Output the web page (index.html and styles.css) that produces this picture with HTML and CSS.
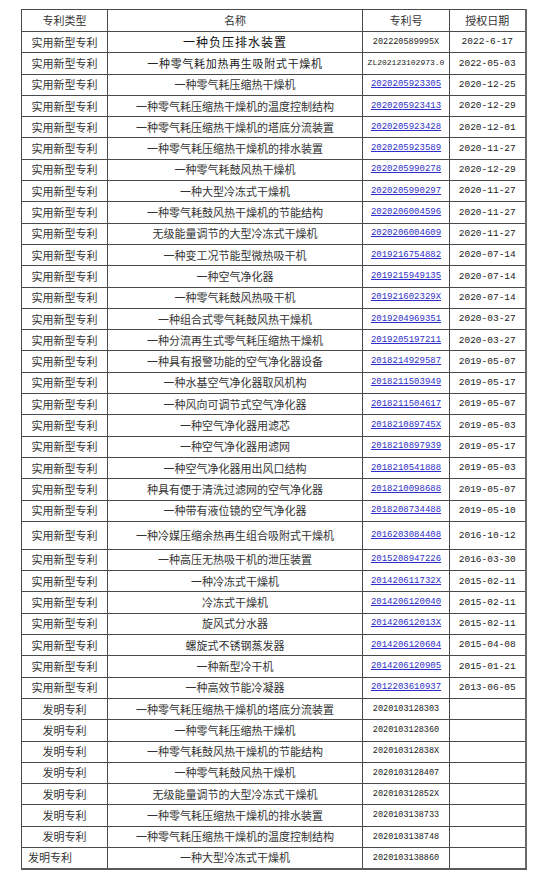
FILE: index.html
```html
<!DOCTYPE html>
<html lang="zh">
<head>
<meta charset="utf-8">
<title>专利列表</title>
<link rel="stylesheet" href="styles.css">
</head>
<body>
<table class="patents">
  <colgroup>
    <col class="c-type"><col class="c-name"><col class="c-no"><col class="c-date">
  </colgroup>
  <thead>
    <tr><th>专利类型</th><th>名称</th><th>专利号</th><th>授权日期</th></tr>
  </thead>
  <tbody>
    <tr><td>实用新型专利</td><td class="name big">一种负压排水装置</td><td class="no plain">202220589995X</td><td class="date">2022-6-17</td></tr>
    <tr><td>实用新型专利</td><td class="name wide">一种零气耗加热再生吸附式干燥机</td><td class="no plain small">ZL202123102973.0</td><td class="date">2022-05-03</td></tr>
    <tr><td>实用新型专利</td><td class="name">一种零气耗压缩热干燥机</td><td class="no"><a href="#">2020205923305</a></td><td class="date">2020-12-25</td></tr>
    <tr><td>实用新型专利</td><td class="name">一种零气耗压缩热干燥机的温度控制结构</td><td class="no"><a href="#">2020205923413</a></td><td class="date">2020-12-29</td></tr>
    <tr><td>实用新型专利</td><td class="name">一种零气耗压缩热干燥机的塔底分流装置</td><td class="no"><a href="#">2020205923428</a></td><td class="date">2020-12-01</td></tr>
    <tr><td>实用新型专利</td><td class="name">一种零气耗压缩热干燥机的排水装置</td><td class="no"><a href="#">2020205923589</a></td><td class="date">2020-11-27</td></tr>
    <tr><td>实用新型专利</td><td class="name">一种零气耗鼓风热干燥机</td><td class="no"><a href="#">2020205990278</a></td><td class="date">2020-12-29</td></tr>
    <tr><td>实用新型专利</td><td class="name">一种大型冷冻式干燥机</td><td class="no"><a href="#">2020205990297</a></td><td class="date">2020-11-27</td></tr>
    <tr><td>实用新型专利</td><td class="name">一种零气耗鼓风热干燥机的节能结构</td><td class="no"><a href="#">2020206004596</a></td><td class="date">2020-11-27</td></tr>
    <tr><td>实用新型专利</td><td class="name">无级能量调节的大型冷冻式干燥机</td><td class="no"><a href="#">2020206004609</a></td><td class="date">2020-11-27</td></tr>
    <tr><td>实用新型专利</td><td class="name">一种变工况节能型微热吸干机</td><td class="no"><a href="#">2019216754882</a></td><td class="date">2020-07-14</td></tr>
    <tr><td>实用新型专利</td><td class="name">一种空气净化器</td><td class="no"><a href="#">2019215949135</a></td><td class="date">2020-07-14</td></tr>
    <tr><td>实用新型专利</td><td class="name">一种零气耗鼓风热吸干机</td><td class="no"><a href="#">201921602329X</a></td><td class="date">2020-07-14</td></tr>
    <tr><td>实用新型专利</td><td class="name">一种组合式零气耗鼓风热干燥机</td><td class="no"><a href="#">2019204969351</a></td><td class="date">2020-03-27</td></tr>
    <tr><td>实用新型专利</td><td class="name">一种分流再生式零气耗压缩热干燥机</td><td class="no"><a href="#">2019205197211</a></td><td class="date">2020-03-27</td></tr>
    <tr><td>实用新型专利</td><td class="name">一种具有报警功能的空气净化器设备</td><td class="no"><a href="#">2018214929587</a></td><td class="date">2019-05-07</td></tr>
    <tr><td>实用新型专利</td><td class="name">一种水基空气净化器取风机构</td><td class="no"><a href="#">2018211503949</a></td><td class="date">2019-05-17</td></tr>
    <tr><td>实用新型专利</td><td class="name">一种风向可调节式空气净化器</td><td class="no"><a href="#">2018211504617</a></td><td class="date">2019-05-07</td></tr>
    <tr><td>实用新型专利</td><td class="name">一种空气净化器用滤芯</td><td class="no"><a href="#">201821089745X</a></td><td class="date">2019-05-03</td></tr>
    <tr><td>实用新型专利</td><td class="name">一种空气净化器用滤网</td><td class="no"><a href="#">2018210897939</a></td><td class="date">2019-05-17</td></tr>
    <tr><td>实用新型专利</td><td class="name">一种空气净化器用出风口结构</td><td class="no"><a href="#">2018210541888</a></td><td class="date">2019-05-03</td></tr>
    <tr><td>实用新型专利</td><td class="name">种具有便于清洗过滤网的空气净化器</td><td class="no"><a href="#">2018210098688</a></td><td class="date">2019-05-07</td></tr>
    <tr><td>实用新型专利</td><td class="name">一种带有液位镜的空气净化器</td><td class="no"><a href="#">2018208734488</a></td><td class="date">2019-05-10</td></tr>
    <tr class="tall"><td>实用新型专利</td><td class="name">一种冷媒压缩余热再生组合吸附式干燥机</td><td class="no"><a href="#">2016203084408</a></td><td class="date">2016-10-12</td></tr>
    <tr><td>实用新型专利</td><td class="name">一种高压无热吸干机的泄压装置</td><td class="no"><a href="#">2015208947226</a></td><td class="date">2016-03-30</td></tr>
    <tr><td>实用新型专利</td><td class="name">一种冷冻式干燥机</td><td class="no"><a href="#">201420611732X</a></td><td class="date">2015-02-11</td></tr>
    <tr><td>实用新型专利</td><td class="name">冷冻式干燥机</td><td class="no"><a href="#">2014206120040</a></td><td class="date">2015-02-11</td></tr>
    <tr><td>实用新型专利</td><td class="name">旋风式分水器</td><td class="no"><a href="#">201420612013X</a></td><td class="date">2015-02-11</td></tr>
    <tr><td>实用新型专利</td><td class="name">螺旋式不锈钢蒸发器</td><td class="no"><a href="#">2014206120604</a></td><td class="date">2015-04-08</td></tr>
    <tr><td>实用新型专利</td><td class="name">一种新型冷干机</td><td class="no"><a href="#">2014206120905</a></td><td class="date">2015-01-21</td></tr>
    <tr><td>实用新型专利</td><td class="name">一种高效节能冷凝器</td><td class="no"><a href="#">2012203610937</a></td><td class="date">2013-06-05</td></tr>
    <tr><td>发明专利</td><td class="name">一种零气耗压缩热干燥机的塔底分流装置</td><td class="no plain">2020103128303</td><td class="date"></td></tr>
    <tr><td>发明专利</td><td class="name">一种零气耗压缩热干燥机</td><td class="no plain">2020103128360</td><td class="date"></td></tr>
    <tr><td>发明专利</td><td class="name">一种零气耗鼓风热干燥机的节能结构</td><td class="no plain">202010312838X</td><td class="date"></td></tr>
    <tr><td>发明专利</td><td class="name">一种零气耗鼓风热干燥机</td><td class="no plain">2020103128407</td><td class="date"></td></tr>
    <tr><td>发明专利</td><td class="name">无级能量调节的大型冷冻式干燥机</td><td class="no plain">202010312852X</td><td class="date"></td></tr>
    <tr><td>发明专利</td><td class="name">一种零气耗压缩热干燥机的排水装置</td><td class="no plain">2020103138733</td><td class="date"></td></tr>
    <tr><td>发明专利</td><td class="name">一种零气耗压缩热干燥机的温度控制结构</td><td class="no plain">2020103138748</td><td class="date"></td></tr>
    <tr><td class="left">发明专利</td><td class="name">一种大型冷冻式干燥机</td><td class="no plain">2020103138860</td><td class="date"></td></tr>
  </tbody>
</table>
</body>
</html>
```

FILE: styles.css
```css
html, body {
  margin: 0;
  padding: 0;
  background: #ffffff;
}

body {
  padding: 9px 0 0 21px;
  font-family: "Noto Sans CJK SC", "Noto Sans", sans-serif;
  color: #333333;
}

.patents {
  border-collapse: collapse;
  table-layout: fixed;
  width: 504px;
  font-size: 11px;
  line-height: 1;
}

.c-type { width: 86px; }
.c-name { width: 255px; }
.c-no { width: 87px; }
.c-date { width: 76px; }

.patents th,
.patents td {
  border: 1px solid #4a4a4a;
  padding: 0 2px;
  text-align: center;
  vertical-align: middle;
  white-space: nowrap;
  overflow: hidden;
  font-weight: normal;
}

.patents th:last-child,
.patents td:last-child {
  border-right: 2px solid #6a6a6a;
}

.patents tbody tr:last-child td {
  border-bottom: 2px solid #5a5a5a;
}

.patents thead tr { height: 22px; }
.patents tbody tr { height: 21.3px; }
.patents tbody tr.tall { height: 28px; }

.patents td.left {
  text-align: left;
  padding-left: 6px;
}

.name.big {
  font-size: 12px;
  letter-spacing: 1px;
  color: #111;
}

.name.wide {
  letter-spacing: 0.7px;
  color: #222;
}

.no {
  font-family: "Liberation Mono", "DejaVu Sans Mono", monospace;
  font-size: 9px;
}

.no a {
  color: #2e2ec8;
  text-decoration: underline;
}

.no.plain {
  color: #222;
  font-size: 8.5px;
}

.no.small {
  font-size: 8px;
}

.date {
  font-family: "Liberation Mono", "DejaVu Sans Mono", monospace;
  font-size: 9.5px;
  color: #222;
}
```
